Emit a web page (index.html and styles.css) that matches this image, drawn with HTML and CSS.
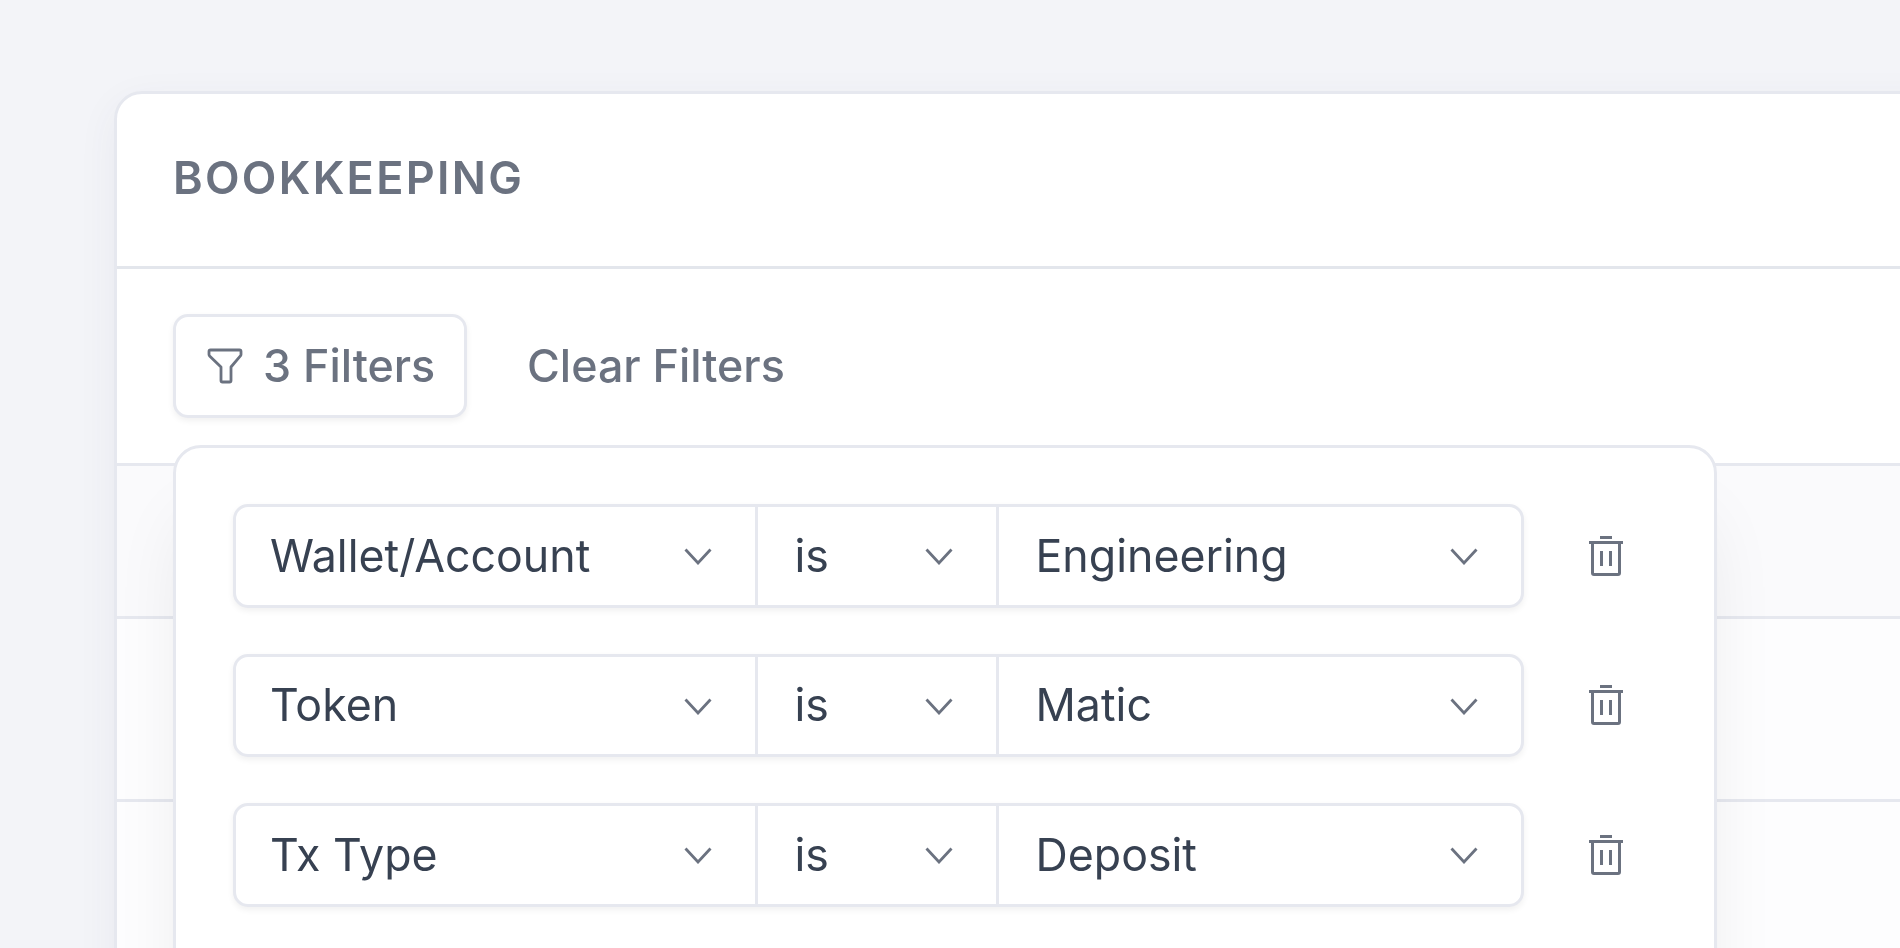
FILE: index.html
```html
<!DOCTYPE html>
<html lang="en">
<head>
<meta charset="utf-8">
<title>Bookkeeping</title>
<link rel="stylesheet" href="styles.css">
</head>
<body>
<main class="page">
  <section class="card">
    <header class="card-header"><h1 class="title">BOOKKEEPING</h1></header>
    <div class="toolbar">
      <button class="filter-btn">
        <svg class="funnel" viewBox="0 0 36 36"><path d="M3.5 2H32.500a1.500 1.500 0 0 1 1.500 1.500V6.500a2 2 0 0 1-.6 1.400L24 19V32.500a1.500 1.500 0 0 1-1.500 1.500H15.500A1.500 1.500 0 0 1 14 32.500V19L2.600 7.900A2 2 0 0 1 2 6.500V3.500A1.500 1.500 0 0 1 3.500 2Z"/></svg>
        <span>3 Filters</span>
      </button>
      <button class="clear-btn">Clear Filters</button>
    </div>
    <div class="table-row row-a"></div>
    <div class="table-row row-b"></div>
    <div class="table-row row-c"></div>

    <div class="popover">
      <div class="filter-row">
        <div class="select-group">
          <div class="cell"><span>Wallet/Account</span><svg class="chevron" viewBox="0 0 28 17"><path d="M1.500 1.500L14 15L26.500 1.500"/></svg></div>
          <div class="cell"><span>is</span><svg class="chevron" viewBox="0 0 28 17"><path d="M1.500 1.500L14 15L26.500 1.500"/></svg></div>
          <div class="cell"><span>Engineering</span><svg class="chevron" viewBox="0 0 28 17"><path d="M1.500 1.500L14 15L26.500 1.500"/></svg></div>
        </div>
        <svg class="trash" viewBox="0 0 35 40"><path d="M12 1.500H24M1 6.500H35M4.500 6.500V37a1.500 1.500 0 0 0 1.500 1.500H30a1.500 1.500 0 0 0 1.500-1.500V6.500M13.500 15V30M22.500 15V30"/></svg>
      </div>
      <div class="filter-row">
        <div class="select-group">
          <div class="cell"><span>Token</span><svg class="chevron" viewBox="0 0 28 17"><path d="M1.500 1.500L14 15L26.500 1.500"/></svg></div>
          <div class="cell"><span>is</span><svg class="chevron" viewBox="0 0 28 17"><path d="M1.500 1.500L14 15L26.500 1.500"/></svg></div>
          <div class="cell"><span>Matic</span><svg class="chevron" viewBox="0 0 28 17"><path d="M1.500 1.500L14 15L26.500 1.500"/></svg></div>
        </div>
        <svg class="trash" viewBox="0 0 35 40"><path d="M12 1.500H24M1 6.500H35M4.500 6.500V37a1.500 1.500 0 0 0 1.500 1.500H30a1.500 1.500 0 0 0 1.500-1.500V6.500M13.500 15V30M22.500 15V30"/></svg>
      </div>
      <div class="filter-row">
        <div class="select-group">
          <div class="cell"><span>Tx Type</span><svg class="chevron" viewBox="0 0 28 17"><path d="M1.500 1.500L14 15L26.500 1.500"/></svg></div>
          <div class="cell"><span>is</span><svg class="chevron" viewBox="0 0 28 17"><path d="M1.500 1.500L14 15L26.500 1.500"/></svg></div>
          <div class="cell"><span>Deposit</span><svg class="chevron" viewBox="0 0 28 17"><path d="M1.500 1.500L14 15L26.500 1.500"/></svg></div>
        </div>
        <svg class="trash" viewBox="0 0 35 40"><path d="M12 1.500H24M1 6.500H35M4.500 6.500V37a1.500 1.500 0 0 0 1.500 1.500H30a1.500 1.500 0 0 0 1.500-1.500V6.500M13.500 15V30M22.500 15V30"/></svg>
      </div>
    </div>
  </section>
</main>
</body>
</html>
```

FILE: styles.css
```css
html, body {
  margin: 0;
  height: 100%;
  overflow: hidden;
  background: #f3f4f8;
}
.page {
  height: 948px;
  overflow: hidden;
  box-sizing: border-box;
  padding: 91px 0 0 114px;
  font-family: Inter, "Liberation Sans", sans-serif;
  filter: blur(0.7px);
}
.card {
  position: relative;
  width: 2000px;
  height: 1200px;
  box-sizing: border-box;
  background: #fff;
  border: 3.500px solid #e6e8ef;
  border-radius: 28px 0 0 0;
  box-shadow: 0 12px 40px rgba(60, 70, 100, .06);
}
.card-header {
  height: 175px;
  padding: 0 0 6px 56px;
  box-sizing: border-box;
  display: flex;
  align-items: center;
  border-bottom: 3.500px solid #e3e6ec;
}
.title {
  margin: 0;
  font-size: 45px;
  font-weight: 600;
  letter-spacing: 2.300px;
  color: #6b7280;
  line-height: 1;
}
.toolbar {
  height: 194px;
  padding-left: 56px;
  padding-top: 45px;
  box-sizing: border-box;
  display: flex;
  align-items: flex-start;
  gap: 60px;
}
.filter-btn {
  width: 294px;
  height: 103.500px;
  box-sizing: border-box;
  background: #fff;
  border: 3.500px solid #e6e8ef;
  border-radius: 15px;
  box-shadow: 0 3px 6px rgba(0, 0, 0, .06);
  padding: 0 0 0 31px;
  display: flex;
  align-items: center;
  gap: 20px;
  font: 450 44.800px Inter, "Liberation Sans", sans-serif;
  color: #6b7280;
}
.funnel {
  width: 36px;
  height: 36px;
  fill: none;
  stroke: #6b7280;
  stroke-width: 2.800;
  stroke-linejoin: round;
}
.clear-btn {
  height: 103px;
  padding: 0;
  background: none;
  border: 0;
  font: 450 44.800px Inter, "Liberation Sans", sans-serif;
  color: #6b7280;
}
.table-row {
  box-sizing: border-box;
  border-top: 3.500px solid #e6e8ef;
}
.row-a { height: 153px; background: #fafafc; }
.row-b { height: 183px; background: #fdfdfe; }
.row-c { height: 300px; background: #fdfdfe; }
.popover {
  position: absolute;
  top: 351px;
  left: 55.500px;
  width: 1544px;
  height: 700px;
  box-sizing: border-box;
  padding: 56px 0 0 57.500px;
  background: #fff;
  border: 3.500px solid #e6e8ef;
  border-radius: 28px;
  box-shadow: 0 62px 78px -16px rgba(0, 0, 0, .09), 0 30px 30px -16px rgba(0, 0, 0, .03);
  display: flex;
  flex-direction: column;
  gap: 46px;
}
.filter-row {
  display: flex;
  align-items: center;
  gap: 64px;
}
.select-group {
  width: 1291px;
  height: 103.500px;
  box-sizing: border-box;
  display: grid;
  grid-template-columns: 521.500px 241px 1fr;
  background: #fff;
  border: 3.500px solid #e6e8ef;
  border-radius: 15px;
  box-shadow: 0 3px 6px rgba(0, 0, 0, .06);
  font-size: 44.700px;
  color: #374151;
}
.cell {
  display: flex;
  align-items: center;
  justify-content: space-between;
  padding: 0 43px 0 37px;
  border-right: 3.500px solid #e6e8ef;
}
.cell:first-child {
  padding-left: 34px;
}
.cell:last-child {
  border-right: 0;
}
.chevron {
  width: 28px;
  height: 17px;
  margin-top: 2px;
  fill: none;
  stroke: #6b7280;
  stroke-width: 2.800;
}
.trash {
  width: 35px;
  height: 40px;
  fill: none;
  stroke: #6b7280;
  stroke-width: 3;
}
```
